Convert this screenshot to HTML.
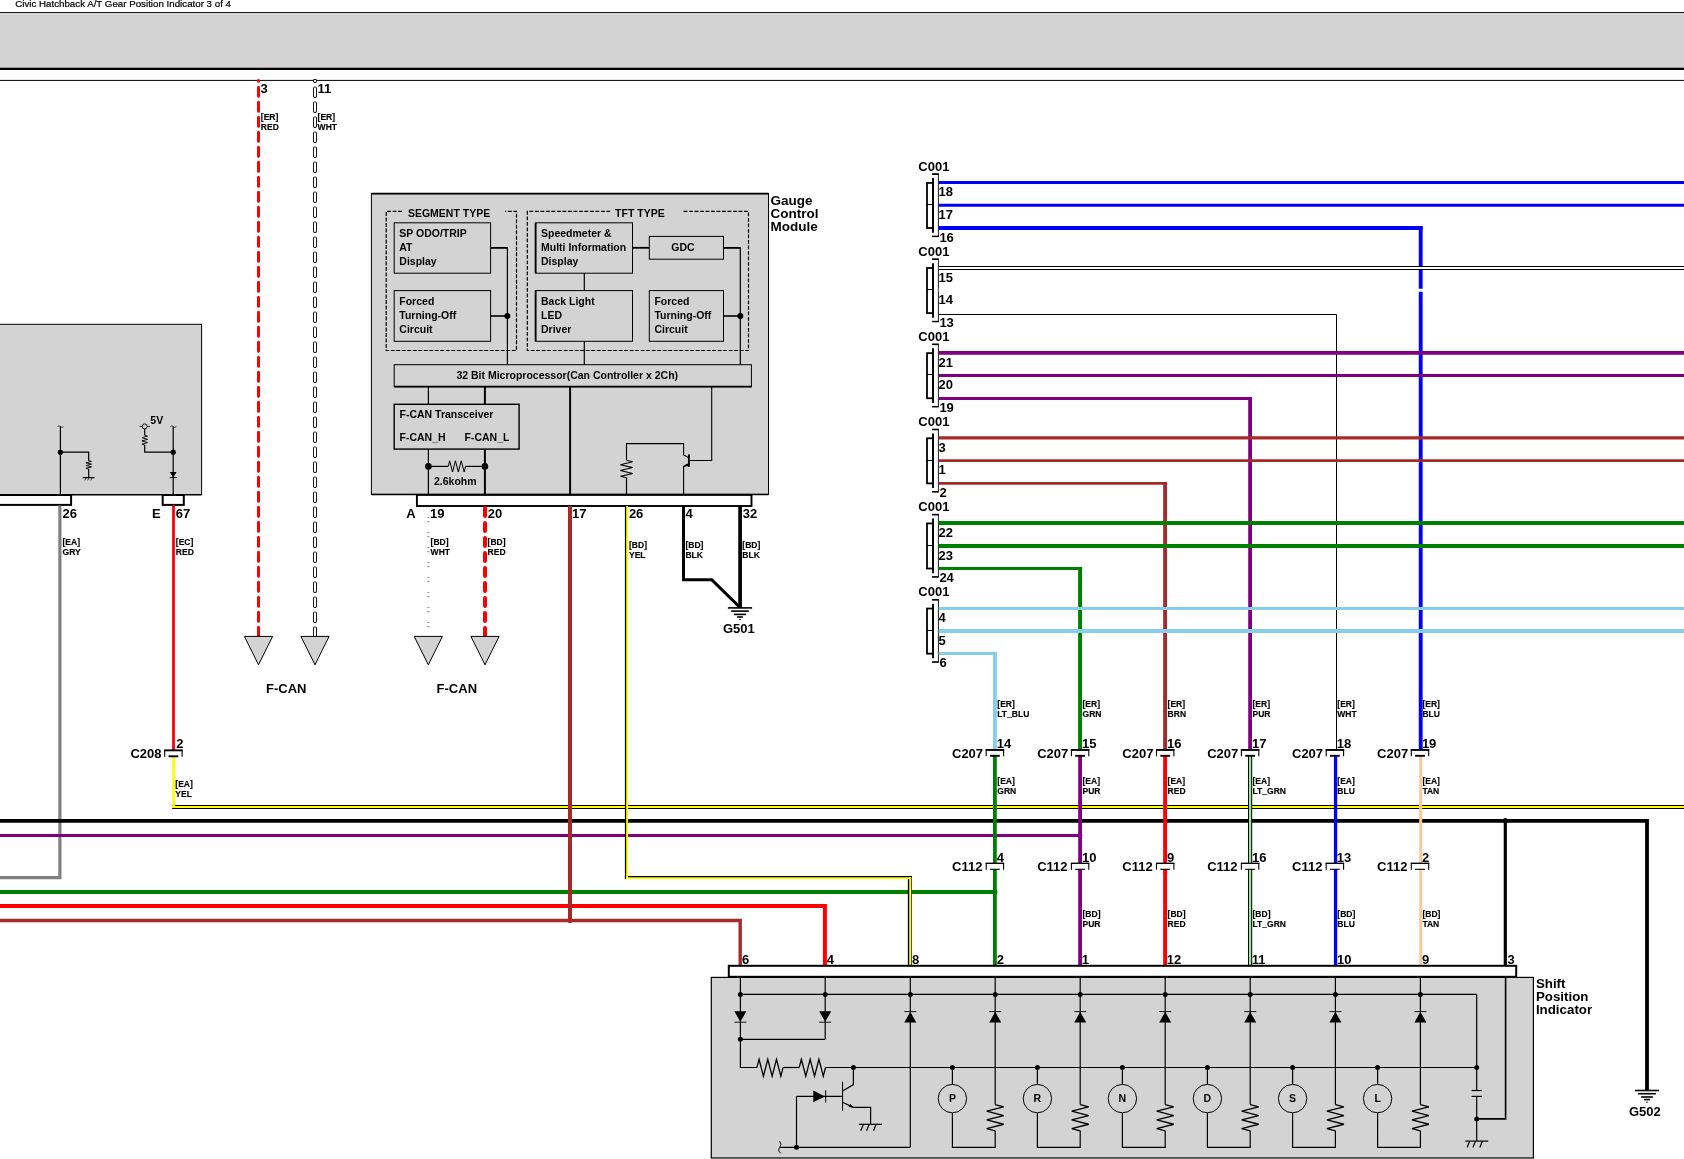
<!DOCTYPE html>
<html lang="en"><head><meta charset="utf-8"><title>Civic Hatchback A/T Gear Position Indicator 3 of 4</title>
<style>
html,body{margin:0;padding:0;background:#fff;}
body{width:1684px;height:1159px;overflow:hidden;}
svg{display:block;will-change:transform;}
text{font-family:"Liberation Sans",Arial,Helvetica,sans-serif;fill:#000;}
text.b{font-weight:bold;}
text.n{font-weight:normal;}
</style></head><body>
<svg width="1684" height="1159" viewBox="0 0 1684 1159">
<rect x="0" y="0" width="1684" height="1159" fill="#fff"/>
<text x="15.2" y="7.3" font-size="9" class="n" stroke="#000" stroke-width="0.2" textLength="215.8" lengthAdjust="spacingAndGlyphs">Civic Hatchback A/T Gear Position Indicator 3 of 4</text>
<rect x="-5" y="12.6" width="1695" height="56" fill="#d3d3d3" stroke="none" stroke-width="0" />
<line x1="0" y1="12.5" x2="1684" y2="12.5" stroke="#000" stroke-width="0.9" />
<line x1="0" y1="68.8" x2="1684" y2="68.8" stroke="#000" stroke-width="2.2" />
<line x1="0" y1="80.4" x2="1684" y2="80.4" stroke="#000" stroke-width="1" />
<line x1="258.5" y1="80.6" x2="258.5" y2="636" stroke="#f00" stroke-width="3" stroke-dasharray="9 6" stroke-dashoffset="8.3" stroke-linecap="round"/>
<line x1="315" y1="80.8" x2="315" y2="636" stroke="#000" stroke-width="4" stroke-dasharray="7.5 7.5" stroke-dashoffset="7.4" stroke-linecap="round"/>
<line x1="315" y1="80.8" x2="315" y2="636" stroke="#fff" stroke-width="2.2" stroke-dasharray="7.5 7.5" stroke-dashoffset="7.4" stroke-linecap="round"/>
<text x="260.6" y="92.7" font-size="13" class="b" >3</text>
<text x="317.5" y="92.7" font-size="13" class="b" >11</text>
<text transform="translate(260.8 119.9) scale(1.035 1)" font-size="8.25" class="b" stroke="#000" stroke-width="0.15">[ER]</text>
<text transform="translate(260.8 129.9) scale(1.035 1)" font-size="8.25" class="b" stroke="#000" stroke-width="0.15">RED</text>
<text transform="translate(317.6 119.9) scale(1.035 1)" font-size="8.25" class="b" stroke="#000" stroke-width="0.15">[ER]</text>
<text transform="translate(317.6 129.9) scale(1.035 1)" font-size="8.25" class="b" stroke="#000" stroke-width="0.15">WHT</text>
<polygon points="244.4,636.4 272.6,636.4 258.5,664.8" fill="#d3d3d3" stroke="#000" stroke-width="1"/>
<polygon points="300.9,636.4 329.1,636.4 315,664.8" fill="#d3d3d3" stroke="#000" stroke-width="1"/>
<text x="266" y="692.7" font-size="13" class="b" >F-CAN</text>
<rect x="-5" y="324.3" width="206.6" height="170.2" fill="#d3d3d3" stroke="#000" stroke-width="1" />
<rect x="-5" y="495" width="76.1" height="9.9" fill="#fff" stroke="#000" stroke-width="2" />
<rect x="162.7" y="495" width="21.1" height="9.9" fill="#fff" stroke="#000" stroke-width="2" />
<line x1="0" y1="494.8" x2="201.6" y2="494.8" stroke="#000" stroke-width="1.6" />
<line x1="60.4" y1="426.4" x2="60.4" y2="494.5" stroke="#000" stroke-width="1.2" />
<path d="M57.5 426.6 q1.5 -1.6 3 0 t3 0" fill="none" stroke="#000" stroke-width="0.7"/>
<circle cx="60.4" cy="452.2" r="2.6" fill="#000"/>
<polyline points="60.4,452.2 88.7,452.2 88.7,460.7" fill="none" stroke="#000" stroke-width="1.2" />
<polyline points="88.7,460.7 91.5,461.39 85.9,462.77 91.5,464.16 85.9,465.54 91.5,466.93 85.9,468.31 88.7,469" fill="none" stroke="#000" stroke-width="0.9" stroke-linejoin="miter"/>
<line x1="88.7" y1="469" x2="88.7" y2="477.6" stroke="#000" stroke-width="1.2" />
<line x1="82.6" y1="477.6" x2="94.6" y2="477.6" stroke="#000" stroke-width="1.2" />
<line x1="86.3" y1="477.6" x2="84.7" y2="480.4" stroke="#000" stroke-width="0.7" />
<line x1="89.3" y1="477.6" x2="87.7" y2="480.4" stroke="#000" stroke-width="0.7" />
<line x1="92.3" y1="477.6" x2="90.7" y2="480.4" stroke="#000" stroke-width="0.7" />
<circle cx="144.7" cy="426.4" r="2.5" fill="#d3d3d3" stroke="#000" stroke-width="0.9"/>
<line x1="139.5" y1="426.4" x2="142.2" y2="426.4" stroke="#000" stroke-width="0.8" />
<line x1="147.2" y1="426.4" x2="150" y2="426.4" stroke="#000" stroke-width="0.8" />
<line x1="144.7" y1="428.9" x2="144.7" y2="435.3" stroke="#000" stroke-width="1.2" />
<polyline points="144.7,435.3 147.5,436.11 141.9,437.73 147.5,439.34 141.9,440.96 147.5,442.57 141.9,444.19 144.7,445" fill="none" stroke="#000" stroke-width="0.9" stroke-linejoin="miter"/>
<polyline points="144.7,445 144.7,452.2 173.2,452.2" fill="none" stroke="#000" stroke-width="1.2" />
<text x="150.3" y="424.2" font-size="10.5" class="b" >5V</text>
<line x1="173.2" y1="426.4" x2="173.2" y2="494.5" stroke="#000" stroke-width="1.2" />
<path d="M170.3 426.6 q1.5 -1.6 3 0 t3 0" fill="none" stroke="#000" stroke-width="0.7"/>
<circle cx="173.2" cy="452.2" r="2.6" fill="#000"/>
<polygon points="169.8,472 176.6,472 173.2,477.4" fill="#000"/>
<line x1="169.6" y1="477.6" x2="176.8" y2="477.6" stroke="#000" stroke-width="0.9" />
<polyline points="59.9,505.4 59.9,877.6 -5,877.6" fill="none" stroke="#808080" stroke-width="3.2" />
<line x1="173.5" y1="505.4" x2="173.5" y2="750" stroke="#f00" stroke-width="2.8" />
<text x="62.5" y="518.3" font-size="13" class="b" >26</text>
<text x="152" y="518.3" font-size="13" class="b" >E</text>
<text x="175.8" y="518.3" font-size="13" class="b" >67</text>
<text transform="translate(62.5 545.3) scale(1.035 1)" font-size="8.25" class="b" stroke="#000" stroke-width="0.15">[EA]</text>
<text transform="translate(62.5 555.3) scale(1.035 1)" font-size="8.25" class="b" stroke="#000" stroke-width="0.15">GRY</text>
<text transform="translate(175.8 545.3) scale(1.035 1)" font-size="8.25" class="b" stroke="#000" stroke-width="0.15">[EC]</text>
<text transform="translate(175.8 555.3) scale(1.035 1)" font-size="8.25" class="b" stroke="#000" stroke-width="0.15">RED</text>
<rect x="371.4" y="193.6" width="397.1" height="300.8" fill="#d3d3d3" stroke="#000" stroke-width="1" />
<line x1="371.4" y1="193.6" x2="768.5" y2="193.6" stroke="#000" stroke-width="1.8" />
<text transform="translate(770.5 205.4) scale(1.04 1)" font-size="13" class="b" >Gauge</text>
<text transform="translate(770.5 218.2) scale(1.04 1)" font-size="13" class="b" >Control</text>
<text transform="translate(770.5 231.3) scale(1.04 1)" font-size="13" class="b" >Module</text>
<polyline points="402,211.4 386.2,211.4 386.2,350.5 516.5,350.5 516.5,211.4 505,211.4" fill="none" stroke="#000" stroke-width="1.2" stroke-dasharray="3.9 1.6"/>
<text transform="translate(407.9 217) scale(1.05 1)" font-size="10" class="b" >SEGMENT TYPE</text>
<polyline points="610.3,211.4 527.3,211.4 527.3,350.5 748.5,350.5 748.5,211.4 683,211.4" fill="none" stroke="#000" stroke-width="1.2" stroke-dasharray="3.9 1.6"/>
<text transform="translate(615.1 217) scale(1.05 1)" font-size="10" class="b" >TFT TYPE</text>
<rect x="394.2" y="222.8" width="96.4" height="50.4" fill="none" stroke="#000" stroke-width="1" />
<text transform="translate(399.3 237) scale(1.05 1)" font-size="10" class="b" >SP ODO/TRIP</text>
<text transform="translate(399.3 250.7) scale(1.05 1)" font-size="10" class="b" >AT</text>
<text transform="translate(399.3 265) scale(1.05 1)" font-size="10" class="b" >Display</text>
<rect x="394.2" y="290.6" width="96.4" height="50.7" fill="none" stroke="#000" stroke-width="1" />
<text transform="translate(399.3 304.9) scale(1.05 1)" font-size="10" class="b" >Forced</text>
<text transform="translate(399.3 318.6) scale(1.05 1)" font-size="10" class="b" >Turning-Off</text>
<text transform="translate(399.3 332.9) scale(1.05 1)" font-size="10" class="b" >Circuit</text>
<polyline points="490.6,247.8 507.4,247.8 507.4,364.7" fill="none" stroke="#000" stroke-width="1.2" />
<line x1="490.6" y1="247.8" x2="507.4" y2="247.8" stroke="#000" stroke-width="1.6" />
<line x1="490.6" y1="316" x2="507.4" y2="316" stroke="#000" stroke-width="1.6" />
<circle cx="507.4" cy="316" r="3" fill="#000"/>
<rect x="535.6" y="222.8" width="96.9" height="50.4" fill="none" stroke="#000" stroke-width="1" />
<line x1="535.6" y1="222.8" x2="535.6" y2="273.2" stroke="#000" stroke-width="1.8" />
<text transform="translate(541 237) scale(1.05 1)" font-size="10" class="b" >Speedmeter &amp;</text>
<text transform="translate(541 250.7) scale(1.05 1)" font-size="10" class="b" >Multi Information</text>
<text transform="translate(541 265) scale(1.05 1)" font-size="10" class="b" >Display</text>
<rect x="649.3" y="236.4" width="74.2" height="22.8" fill="none" stroke="#000" stroke-width="1" />
<text transform="translate(671.3 251) scale(1.05 1)" font-size="10" class="b" >GDC</text>
<line x1="632.5" y1="247.8" x2="649.3" y2="247.8" stroke="#000" stroke-width="1.8" />
<polyline points="723.5,247.8 740.3,247.8 740.3,364.7" fill="none" stroke="#000" stroke-width="1.2" />
<line x1="723.5" y1="247.8" x2="740.3" y2="247.8" stroke="#000" stroke-width="1.6" />
<rect x="535.6" y="290.6" width="96.9" height="50.7" fill="none" stroke="#000" stroke-width="1" />
<line x1="535.6" y1="290.6" x2="535.6" y2="341.3" stroke="#000" stroke-width="1.8" />
<text transform="translate(541 304.9) scale(1.05 1)" font-size="10" class="b" >Back Light</text>
<text transform="translate(541 318.6) scale(1.05 1)" font-size="10" class="b" >LED</text>
<text transform="translate(541 332.9) scale(1.05 1)" font-size="10" class="b" >Driver</text>
<rect x="649.3" y="290.6" width="74.2" height="50.7" fill="none" stroke="#000" stroke-width="1" />
<text transform="translate(654.4 304.9) scale(1.05 1)" font-size="10" class="b" >Forced</text>
<text transform="translate(654.4 318.6) scale(1.05 1)" font-size="10" class="b" >Turning-Off</text>
<text transform="translate(654.4 332.9) scale(1.05 1)" font-size="10" class="b" >Circuit</text>
<line x1="723.5" y1="316" x2="740.3" y2="316" stroke="#000" stroke-width="1.6" />
<circle cx="740.3" cy="316" r="3" fill="#000"/>
<line x1="584.3" y1="273.2" x2="584.3" y2="290.6" stroke="#000" stroke-width="1.2" />
<line x1="584.3" y1="341.3" x2="584.3" y2="364.7" stroke="#000" stroke-width="1.2" />
<rect x="394.2" y="364.7" width="357.2" height="22" fill="none" stroke="#000" stroke-width="1" />
<line x1="394.2" y1="386.7" x2="751.4" y2="386.7" stroke="#000" stroke-width="1.8" />
<text transform="translate(456.4 378.8) scale(1.05 1)" font-size="10" class="b" >32 Bit Microprocessor(Can Controller x 2Ch)</text>
<rect x="394.2" y="404.3" width="124.9" height="44.8" fill="none" stroke="#000" stroke-width="1.4" />
<text transform="translate(399.5 417.9) scale(1.05 1)" font-size="10" class="b" >F-CAN Transceiver</text>
<text transform="translate(399.5 440.9) scale(1.05 1)" font-size="10" class="b" >F-CAN_H</text>
<text transform="translate(464.5 440.9) scale(1.05 1)" font-size="10" class="b" >F-CAN_L</text>
<line x1="428.4" y1="386.7" x2="428.4" y2="404.3" stroke="#000" stroke-width="1.2" />
<line x1="484.9" y1="386.7" x2="484.9" y2="404.3" stroke="#000" stroke-width="2" />
<line x1="428.4" y1="449.1" x2="428.4" y2="494.4" stroke="#000" stroke-width="1.2" />
<line x1="484.9" y1="449.1" x2="484.9" y2="494.4" stroke="#000" stroke-width="2" />
<circle cx="428.4" cy="466.4" r="3.3" fill="#000"/>
<circle cx="484.9" cy="466.4" r="3.3" fill="#000"/>
<line x1="428.4" y1="466.4" x2="448.2" y2="466.4" stroke="#000" stroke-width="1.2" />
<line x1="465.6" y1="466.4" x2="484.9" y2="466.4" stroke="#000" stroke-width="1.2" />
<polyline points="448.2,466.4 449.65,460.8 452.55,472 455.45,460.8 458.35,472 461.25,460.8 464.15,472 465.6,466.4" fill="none" stroke="#000" stroke-width="1" stroke-linejoin="miter"/>
<text transform="translate(434 484.7) scale(1.05 1)" font-size="10" class="b" >2.6kohm</text>
<line x1="570.1" y1="386.7" x2="570.1" y2="494.4" stroke="#000" stroke-width="2" />
<polyline points="711.7,386.7 711.7,460.5 688.9,460.5" fill="none" stroke="#000" stroke-width="1.1" />
<line x1="688.9" y1="454.4" x2="688.9" y2="466.8" stroke="#000" stroke-width="1.9" />
<polyline points="626.5,460.3 626.5,443.6 683.6,443.6 683.6,455 688.4,457.4" fill="none" stroke="#000" stroke-width="1.1" />
<polyline points="688.4,463.9 683.6,466.4 683.6,494.4" fill="none" stroke="#000" stroke-width="1.1" />
<polygon points="683.2,466.9 687.2,463.4 688.2,466" fill="#000"/>
<polyline points="626.5,460.3 632.6,461.76 620.4,464.68 632.6,467.59 620.4,470.51 632.6,473.43 620.4,476.34 626.5,477.8" fill="none" stroke="#000" stroke-width="1.1" stroke-linejoin="miter"/>
<line x1="626.5" y1="477.5" x2="626.5" y2="494.4" stroke="#000" stroke-width="1.2" />
<rect x="416.9" y="494.9" width="334.6" height="11.1" fill="#fff" stroke="#000" stroke-width="1.9" />
<line x1="371.4" y1="494.6" x2="768.5" y2="494.6" stroke="#000" stroke-width="1.5" />
<text x="406.2" y="518.3" font-size="13" class="b" >A</text>
<text x="430" y="518.3" font-size="13" class="b" >19</text>
<text x="487.7" y="518.3" font-size="13" class="b" >20</text>
<text x="572" y="518.3" font-size="13" class="b" >17</text>
<text x="628.9" y="518.3" font-size="13" class="b" >26</text>
<text x="685.5" y="518.3" font-size="13" class="b" >4</text>
<text x="742.8" y="518.3" font-size="13" class="b" >32</text>
<text transform="translate(430.6 545.3) scale(1.035 1)" font-size="8.25" class="b" stroke="#000" stroke-width="0.15">[BD]</text>
<text transform="translate(430.6 555.3) scale(1.035 1)" font-size="8.25" class="b" stroke="#000" stroke-width="0.15">WHT</text>
<text transform="translate(487.6 545.3) scale(1.035 1)" font-size="8.25" class="b" stroke="#000" stroke-width="0.15">[BD]</text>
<text transform="translate(487.6 555.3) scale(1.035 1)" font-size="8.25" class="b" stroke="#000" stroke-width="0.15">RED</text>
<text transform="translate(629 548) scale(1.035 1)" font-size="8.25" class="b" stroke="#000" stroke-width="0.15">[BD]</text>
<text transform="translate(629 558) scale(1.035 1)" font-size="8.25" class="b" stroke="#000" stroke-width="0.15">YEL</text>
<text transform="translate(685.4 548) scale(1.035 1)" font-size="8.25" class="b" stroke="#000" stroke-width="0.15">[BD]</text>
<text transform="translate(685.4 558) scale(1.035 1)" font-size="8.25" class="b" stroke="#000" stroke-width="0.15">BLK</text>
<text transform="translate(742.3 548) scale(1.035 1)" font-size="8.25" class="b" stroke="#000" stroke-width="0.15">[BD]</text>
<text transform="translate(742.3 558) scale(1.035 1)" font-size="8.25" class="b" stroke="#000" stroke-width="0.15">BLK</text>
<line x1="428.4" y1="516.9" x2="428.4" y2="628" stroke="#999" stroke-width="2.2" stroke-dasharray="1.2 3 1.2 9.6" />
<line x1="485" y1="508" x2="485" y2="636.5" stroke="#f00" stroke-width="4" stroke-dasharray="8 7" stroke-linecap="round"/>
<polygon points="414.2,636.4 442.4,636.4 428.3,664.8" fill="#d3d3d3" stroke="#000" stroke-width="1"/>
<polygon points="470.9,636.4 499.1,636.4 485,664.8" fill="#d3d3d3" stroke="#000" stroke-width="1"/>
<text x="436.6" y="692.7" font-size="13" class="b" >F-CAN</text>
<polyline points="683.5,506 683.5,579.8 711.7,579.8 739.9,607.4" fill="none" stroke="#000" stroke-width="3" stroke-linejoin="miter"/>
<line x1="740.1" y1="506" x2="740.1" y2="608" stroke="#000" stroke-width="3.7" />
<line x1="727.9" y1="607.9" x2="752.1" y2="607.9" stroke="#000" stroke-width="1.6" />
<line x1="731.1" y1="611.1" x2="748.9" y2="611.1" stroke="#000" stroke-width="1.6" />
<line x1="734.1" y1="614.4" x2="745.9" y2="614.4" stroke="#000" stroke-width="1.6" />
<line x1="737.1" y1="617" x2="742.9" y2="617" stroke="#000" stroke-width="1.6" />
<line x1="739.2" y1="619.6" x2="740.8" y2="619.6" stroke="#000" stroke-width="1" />
<text x="722.9" y="633.4" font-size="13" class="b" >G501</text>
<line x1="172.2" y1="807" x2="1690" y2="807" stroke="#000" stroke-width="4" />
<line x1="172.2" y1="807" x2="1690" y2="807" stroke="#ff0" stroke-width="2.2" />
<line x1="173.6" y1="757" x2="173.6" y2="808" stroke="#ff0" stroke-width="2.8" />
<polyline points="-5,820.9 1647,820.9 1647,1090" fill="none" stroke="#000" stroke-width="3.8" stroke-linejoin="miter"/>
<line x1="1505.3" y1="820.9" x2="1505.3" y2="966" stroke="#000" stroke-width="3.2" />
<circle cx="1505.3" cy="820.6" r="2.5" fill="#000"/>
<line x1="1634.9" y1="1090.5" x2="1659.1" y2="1090.5" stroke="#000" stroke-width="1.6" />
<line x1="1638.1" y1="1093.7" x2="1655.9" y2="1093.7" stroke="#000" stroke-width="1.6" />
<line x1="1641.1" y1="1097" x2="1652.9" y2="1097" stroke="#000" stroke-width="1.6" />
<line x1="1644.1" y1="1099.6" x2="1649.9" y2="1099.6" stroke="#000" stroke-width="1.6" />
<line x1="1646.2" y1="1102.2" x2="1647.8" y2="1102.2" stroke="#000" stroke-width="1" />
<text x="1628.9" y="1115.7" font-size="13" class="b" >G502</text>
<line x1="-5" y1="835.4" x2="1080" y2="835.4" stroke="#800080" stroke-width="3" />
<line x1="-5" y1="892" x2="995" y2="892" stroke="#008000" stroke-width="4" />
<line x1="626.45" y1="506" x2="626.45" y2="879" stroke="#000" stroke-width="3.1" />
<line x1="624.9" y1="877.45" x2="911.9" y2="877.45" stroke="#000" stroke-width="3.15" />
<line x1="909.85" y1="876" x2="909.85" y2="966" stroke="#000" stroke-width="4" />
<line x1="627.1" y1="506" x2="627.1" y2="879.06" stroke="#ff0" stroke-width="1.9" />
<line x1="626.2" y1="878.1" x2="911.2" y2="878.1" stroke="#ff0" stroke-width="1.95" />
<line x1="910.2" y1="877.1" x2="910.2" y2="966" stroke="#ff0" stroke-width="2" />
<polyline points="-5,906 824.9,906 824.9,966" fill="none" stroke="#f00" stroke-width="4" stroke-linejoin="miter"/>
<line x1="570" y1="506" x2="570" y2="920.5" stroke="#a52a2a" stroke-width="4" />
<polyline points="-5,920.5 740.2,920.5 740.2,966" fill="none" stroke="#a52a2a" stroke-width="3.4" stroke-linejoin="miter"/>
<circle cx="570" cy="920.5" r="2.6" fill="#a52a2a"/>
<rect x="169.4" y="750.7" width="8" height="5.3" fill="#fff" stroke="none" stroke-width="0" />
<polyline points="164.7,756.8 164.7,750.4 182.1,750.4 182.1,756.8" fill="none" stroke="#000" stroke-width="1.1" />
<line x1="164.2" y1="750.4" x2="182.6" y2="750.4" stroke="#000" stroke-width="1.8" />
<line x1="168.5" y1="756.3" x2="178.3" y2="756.3" stroke="#000" stroke-width="1.9" />
<text x="130.4" y="758.4" font-size="13" class="b" >C208</text>
<text x="176.3" y="748.4" font-size="13" class="b" >2</text>
<text transform="translate(175.3 786.8) scale(1.035 1)" font-size="8.25" class="b" stroke="#000" stroke-width="0.15">[EA]</text>
<text transform="translate(175.3 796.8) scale(1.035 1)" font-size="8.25" class="b" stroke="#000" stroke-width="0.15">YEL</text>
<text x="918.3" y="171.1" font-size="13" class="b" >C001</text>
<rect x="927" y="182.9" width="6" height="45.1" fill="#fff" stroke="#000" stroke-width="1.8" />
<line x1="927" y1="204.5" x2="933" y2="204.5" stroke="#000" stroke-width="1" />
<line x1="933" y1="178.1" x2="933" y2="232.7" stroke="#000" stroke-width="1.9" />
<polyline points="932.1,174.1 938.4,174.1 938.4,236.4 932.1,236.4" fill="none" stroke="#000" stroke-width="0.9" />
<line x1="932.1" y1="174.1" x2="938.8" y2="174.1" stroke="#000" stroke-width="1.6" />
<line x1="932.1" y1="236.4" x2="938.8" y2="236.4" stroke="#000" stroke-width="1.4" />
<text x="938.6" y="196.4" font-size="13" class="b" >18</text>
<text x="938.6" y="219" font-size="13" class="b" >17</text>
<text x="939.4" y="241.6" font-size="13" class="b" >16</text>
<line x1="938.7" y1="182.5" x2="1690" y2="182.5" stroke="#00f" stroke-width="3" />
<line x1="938.7" y1="205.2" x2="1690" y2="205.2" stroke="#00f" stroke-width="3" />
<line x1="938.7" y1="228" x2="1422.65" y2="228" stroke="#00f" stroke-width="3.8" />
<line x1="1420.7" y1="226.1" x2="1420.7" y2="749.9" stroke="#00f" stroke-width="3.9" />
<text x="918.3" y="256.15" font-size="13" class="b" >C001</text>
<rect x="927" y="268.03" width="6" height="45.1" fill="#fff" stroke="#000" stroke-width="1.8" />
<line x1="927" y1="289.5" x2="933" y2="289.5" stroke="#000" stroke-width="1" />
<line x1="933" y1="263.23" x2="933" y2="317.83" stroke="#000" stroke-width="1.9" />
<polyline points="932.1,259.23 938.4,259.23 938.4,321.53 932.1,321.53" fill="none" stroke="#000" stroke-width="0.9" />
<line x1="932.1" y1="259.23" x2="938.8" y2="259.23" stroke="#000" stroke-width="1.6" />
<line x1="932.1" y1="321.53" x2="938.8" y2="321.53" stroke="#000" stroke-width="1.4" />
<text x="938.6" y="281.53" font-size="13" class="b" >15</text>
<text x="938.6" y="304.13" font-size="13" class="b" >14</text>
<text x="939.4" y="326.73" font-size="13" class="b" >13</text>
<line x1="938.7" y1="268.1" x2="1690" y2="268.1" stroke="#000" stroke-width="4" />
<line x1="938.7" y1="268.1" x2="1690" y2="268.1" stroke="#fff" stroke-width="2" />
<line x1="938.7" y1="290.33" x2="1690" y2="290.33" stroke="#fff" stroke-width="3" />
<polyline points="938.7,314.5 1336.5,314.5 1336.5,749.9" fill="none" stroke="#000" stroke-width="1" stroke-linejoin="miter"/>
<text x="918.3" y="341.2" font-size="13" class="b" >C001</text>
<rect x="927" y="353.16" width="6" height="45.1" fill="#fff" stroke="#000" stroke-width="1.8" />
<line x1="927" y1="374.5" x2="933" y2="374.5" stroke="#000" stroke-width="1" />
<line x1="933" y1="348.36" x2="933" y2="402.96" stroke="#000" stroke-width="1.9" />
<polyline points="932.1,344.36 938.4,344.36 938.4,406.66 932.1,406.66" fill="none" stroke="#000" stroke-width="0.9" />
<line x1="932.1" y1="344.36" x2="938.8" y2="344.36" stroke="#000" stroke-width="1.6" />
<line x1="932.1" y1="406.66" x2="938.8" y2="406.66" stroke="#000" stroke-width="1.4" />
<text x="938.6" y="366.66" font-size="13" class="b" >21</text>
<text x="938.6" y="389.26" font-size="13" class="b" >20</text>
<text x="939.4" y="411.86" font-size="13" class="b" >19</text>
<line x1="938.7" y1="352.96" x2="1690" y2="352.96" stroke="#800080" stroke-width="3.8" />
<line x1="938.7" y1="375.46" x2="1690" y2="375.46" stroke="#800080" stroke-width="3.1" />
<line x1="938.7" y1="398.46" x2="1252" y2="398.46" stroke="#800080" stroke-width="3.1" />
<line x1="1250.1" y1="396.91" x2="1250.1" y2="749.9" stroke="#800080" stroke-width="3.8" />
<text x="918.3" y="426.25" font-size="13" class="b" >C001</text>
<rect x="927" y="438.29" width="6" height="45.1" fill="#fff" stroke="#000" stroke-width="1.8" />
<line x1="927" y1="460.5" x2="933" y2="460.5" stroke="#000" stroke-width="1" />
<line x1="933" y1="433.49" x2="933" y2="488.09" stroke="#000" stroke-width="1.9" />
<polyline points="932.1,429.49 938.4,429.49 938.4,491.79 932.1,491.79" fill="none" stroke="#000" stroke-width="0.9" />
<line x1="932.1" y1="429.49" x2="938.8" y2="429.49" stroke="#000" stroke-width="1.6" />
<line x1="932.1" y1="491.79" x2="938.8" y2="491.79" stroke="#000" stroke-width="1.4" />
<text x="938.6" y="451.79" font-size="13" class="b" >3</text>
<text x="938.6" y="474.39" font-size="13" class="b" >1</text>
<text x="939.4" y="496.99" font-size="13" class="b" >2</text>
<line x1="938.7" y1="437.89" x2="1690" y2="437.89" stroke="#a52a2a" stroke-width="3.4" />
<line x1="938.7" y1="460.59" x2="1690" y2="460.59" stroke="#a52a2a" stroke-width="2.8" />
<line x1="938.7" y1="483.39" x2="1167.05" y2="483.39" stroke="#a52a2a" stroke-width="2.9" />
<line x1="1165.1" y1="481.94" x2="1165.1" y2="749.9" stroke="#a52a2a" stroke-width="3.9" />
<text x="918.3" y="511.3" font-size="13" class="b" >C001</text>
<rect x="927" y="523.42" width="6" height="45.1" fill="#fff" stroke="#000" stroke-width="1.8" />
<line x1="927" y1="545.5" x2="933" y2="545.5" stroke="#000" stroke-width="1" />
<line x1="933" y1="518.62" x2="933" y2="573.22" stroke="#000" stroke-width="1.9" />
<polyline points="932.1,514.62 938.4,514.62 938.4,576.92 932.1,576.92" fill="none" stroke="#000" stroke-width="0.9" />
<line x1="932.1" y1="514.62" x2="938.8" y2="514.62" stroke="#000" stroke-width="1.6" />
<line x1="932.1" y1="576.92" x2="938.8" y2="576.92" stroke="#000" stroke-width="1.4" />
<text x="938.6" y="536.92" font-size="13" class="b" >22</text>
<text x="938.6" y="559.52" font-size="13" class="b" >23</text>
<text x="939.4" y="582.12" font-size="13" class="b" >24</text>
<line x1="938.7" y1="523.02" x2="1690" y2="523.02" stroke="#008000" stroke-width="3.8" />
<line x1="938.7" y1="545.92" x2="1690" y2="545.92" stroke="#008000" stroke-width="4" />
<line x1="938.7" y1="568.52" x2="1082.1" y2="568.52" stroke="#008000" stroke-width="3.1" />
<line x1="1080.1" y1="566.97" x2="1080.1" y2="749.9" stroke="#008000" stroke-width="4" />
<text x="918.3" y="596.35" font-size="13" class="b" >C001</text>
<rect x="927" y="608.55" width="6" height="45.1" fill="#fff" stroke="#000" stroke-width="1.8" />
<line x1="927" y1="630.5" x2="933" y2="630.5" stroke="#000" stroke-width="1" />
<line x1="933" y1="603.75" x2="933" y2="658.35" stroke="#000" stroke-width="1.9" />
<polyline points="932.1,599.75 938.4,599.75 938.4,662.05 932.1,662.05" fill="none" stroke="#000" stroke-width="0.9" />
<line x1="932.1" y1="599.75" x2="938.8" y2="599.75" stroke="#000" stroke-width="1.6" />
<line x1="932.1" y1="662.05" x2="938.8" y2="662.05" stroke="#000" stroke-width="1.4" />
<text x="938.6" y="622.05" font-size="13" class="b" >4</text>
<text x="938.6" y="644.65" font-size="13" class="b" >5</text>
<text x="939.4" y="667.25" font-size="13" class="b" >6</text>
<line x1="938.7" y1="608.55" x2="1690" y2="608.55" stroke="#87ceeb" stroke-width="3" />
<line x1="938.7" y1="631" x2="1690" y2="631" stroke="#87ceeb" stroke-width="3.8" />
<line x1="938.7" y1="653.5" x2="996.85" y2="653.5" stroke="#87ceeb" stroke-width="3" />
<line x1="994.9" y1="652" x2="994.9" y2="749.9" stroke="#87ceeb" stroke-width="3.9" />
<line x1="994.9" y1="756" x2="994.9" y2="966" stroke="#008000" stroke-width="3.8" />
<line x1="1080.1" y1="756" x2="1080.1" y2="966" stroke="#800080" stroke-width="3.8" />
<line x1="1165.1" y1="756" x2="1165.1" y2="966" stroke="#f00" stroke-width="3.9" />
<line x1="1250.1" y1="756" x2="1250.1" y2="966" stroke="#000" stroke-width="4.2" />
<line x1="1250.1" y1="756" x2="1250.1" y2="966" stroke="#90ee90" stroke-width="2.2" />
<line x1="1335.55" y1="756" x2="1335.55" y2="966" stroke="#00f" stroke-width="3.3" />
<line x1="1420.7" y1="756" x2="1420.7" y2="966" stroke="#fdc998" stroke-width="3" />
<circle cx="1080" cy="835.4" r="2.4" fill="#800080"/>
<circle cx="994.9" cy="892" r="2.6" fill="#008000"/>
<rect x="990.9" y="750.2" width="8" height="5.3" fill="#fff" stroke="none" stroke-width="0" />
<polyline points="986.2,756.3 986.2,749.9 1003.6,749.9 1003.6,756.3" fill="none" stroke="#000" stroke-width="1.1" />
<line x1="985.7" y1="749.9" x2="1004.1" y2="749.9" stroke="#000" stroke-width="1.8" />
<line x1="990" y1="755.8" x2="999.8" y2="755.8" stroke="#000" stroke-width="1.9" />
<text x="952" y="757.9" font-size="13" class="b" >C207</text>
<text x="996.8" y="747.9" font-size="13" class="b" >14</text>
<rect x="990.9" y="863.7" width="8" height="5.3" fill="#fff" stroke="none" stroke-width="0" />
<polyline points="986.2,869.8 986.2,863.4 1003.6,863.4 1003.6,869.8" fill="none" stroke="#000" stroke-width="1.1" />
<line x1="985.7" y1="863.4" x2="1004.1" y2="863.4" stroke="#000" stroke-width="1.2" />
<line x1="990" y1="869.3" x2="999.8" y2="869.3" stroke="#000" stroke-width="1.1" />
<text x="952" y="871.4" font-size="13" class="b" >C112</text>
<text x="996.8" y="862.1" font-size="13" class="b" >4</text>
<text transform="translate(997.3 706.9) scale(1.035 1)" font-size="8.25" class="b" stroke="#000" stroke-width="0.15">[ER]</text>
<text transform="translate(997.3 717) scale(1.035 1)" font-size="8.25" class="b" stroke="#000" stroke-width="0.15">LT_BLU</text>
<text transform="translate(997.3 783.5) scale(1.035 1)" font-size="8.25" class="b" stroke="#000" stroke-width="0.15">[EA]</text>
<text transform="translate(997.3 793.8) scale(1.035 1)" font-size="8.25" class="b" stroke="#000" stroke-width="0.15">GRN</text>
<rect x="1076.1" y="750.2" width="8" height="5.3" fill="#fff" stroke="none" stroke-width="0" />
<polyline points="1071.4,756.3 1071.4,749.9 1088.8,749.9 1088.8,756.3" fill="none" stroke="#000" stroke-width="1.1" />
<line x1="1070.9" y1="749.9" x2="1089.3" y2="749.9" stroke="#000" stroke-width="1.8" />
<line x1="1075.2" y1="755.8" x2="1085" y2="755.8" stroke="#000" stroke-width="1.9" />
<text x="1037.2" y="757.9" font-size="13" class="b" >C207</text>
<text x="1082" y="747.9" font-size="13" class="b" >15</text>
<rect x="1076.1" y="863.7" width="8" height="5.3" fill="#fff" stroke="none" stroke-width="0" />
<polyline points="1071.4,869.8 1071.4,863.4 1088.8,863.4 1088.8,869.8" fill="none" stroke="#000" stroke-width="1.1" />
<line x1="1070.9" y1="863.4" x2="1089.3" y2="863.4" stroke="#000" stroke-width="1.2" />
<line x1="1075.2" y1="869.3" x2="1085" y2="869.3" stroke="#000" stroke-width="1.1" />
<text x="1037.2" y="871.4" font-size="13" class="b" >C112</text>
<text x="1082" y="862.1" font-size="13" class="b" >10</text>
<text transform="translate(1082.5 706.9) scale(1.035 1)" font-size="8.25" class="b" stroke="#000" stroke-width="0.15">[ER]</text>
<text transform="translate(1082.5 717) scale(1.035 1)" font-size="8.25" class="b" stroke="#000" stroke-width="0.15">GRN</text>
<text transform="translate(1082.5 783.5) scale(1.035 1)" font-size="8.25" class="b" stroke="#000" stroke-width="0.15">[EA]</text>
<text transform="translate(1082.5 793.8) scale(1.035 1)" font-size="8.25" class="b" stroke="#000" stroke-width="0.15">PUR</text>
<text transform="translate(1082.5 917) scale(1.035 1)" font-size="8.25" class="b" stroke="#000" stroke-width="0.15">[BD]</text>
<text transform="translate(1082.5 926.9) scale(1.035 1)" font-size="8.25" class="b" stroke="#000" stroke-width="0.15">PUR</text>
<rect x="1161.2" y="750.2" width="8" height="5.3" fill="#fff" stroke="none" stroke-width="0" />
<polyline points="1156.5,756.3 1156.5,749.9 1173.9,749.9 1173.9,756.3" fill="none" stroke="#000" stroke-width="1.1" />
<line x1="1156" y1="749.9" x2="1174.4" y2="749.9" stroke="#000" stroke-width="1.8" />
<line x1="1160.3" y1="755.8" x2="1170.1" y2="755.8" stroke="#000" stroke-width="1.9" />
<text x="1122.3" y="757.9" font-size="13" class="b" >C207</text>
<text x="1167.1" y="747.9" font-size="13" class="b" >16</text>
<rect x="1161.2" y="863.7" width="8" height="5.3" fill="#fff" stroke="none" stroke-width="0" />
<polyline points="1156.5,869.8 1156.5,863.4 1173.9,863.4 1173.9,869.8" fill="none" stroke="#000" stroke-width="1.1" />
<line x1="1156" y1="863.4" x2="1174.4" y2="863.4" stroke="#000" stroke-width="1.2" />
<line x1="1160.3" y1="869.3" x2="1170.1" y2="869.3" stroke="#000" stroke-width="1.1" />
<text x="1122.3" y="871.4" font-size="13" class="b" >C112</text>
<text x="1167.1" y="862.1" font-size="13" class="b" >9</text>
<text transform="translate(1167.6 706.9) scale(1.035 1)" font-size="8.25" class="b" stroke="#000" stroke-width="0.15">[ER]</text>
<text transform="translate(1167.6 717) scale(1.035 1)" font-size="8.25" class="b" stroke="#000" stroke-width="0.15">BRN</text>
<text transform="translate(1167.6 783.5) scale(1.035 1)" font-size="8.25" class="b" stroke="#000" stroke-width="0.15">[EA]</text>
<text transform="translate(1167.6 793.8) scale(1.035 1)" font-size="8.25" class="b" stroke="#000" stroke-width="0.15">RED</text>
<text transform="translate(1167.6 917) scale(1.035 1)" font-size="8.25" class="b" stroke="#000" stroke-width="0.15">[BD]</text>
<text transform="translate(1167.6 926.9) scale(1.035 1)" font-size="8.25" class="b" stroke="#000" stroke-width="0.15">RED</text>
<rect x="1246.1" y="750.2" width="8" height="5.3" fill="#fff" stroke="none" stroke-width="0" />
<polyline points="1241.4,756.3 1241.4,749.9 1258.8,749.9 1258.8,756.3" fill="none" stroke="#000" stroke-width="1.1" />
<line x1="1240.9" y1="749.9" x2="1259.3" y2="749.9" stroke="#000" stroke-width="1.8" />
<line x1="1245.2" y1="755.8" x2="1255" y2="755.8" stroke="#000" stroke-width="1.9" />
<text x="1207.2" y="757.9" font-size="13" class="b" >C207</text>
<text x="1252" y="747.9" font-size="13" class="b" >17</text>
<rect x="1246.1" y="863.7" width="8" height="5.3" fill="#fff" stroke="none" stroke-width="0" />
<polyline points="1241.4,869.8 1241.4,863.4 1258.8,863.4 1258.8,869.8" fill="none" stroke="#000" stroke-width="1.1" />
<line x1="1240.9" y1="863.4" x2="1259.3" y2="863.4" stroke="#000" stroke-width="1.2" />
<line x1="1245.2" y1="869.3" x2="1255" y2="869.3" stroke="#000" stroke-width="1.1" />
<text x="1207.2" y="871.4" font-size="13" class="b" >C112</text>
<text x="1252" y="862.1" font-size="13" class="b" >16</text>
<text transform="translate(1252.5 706.9) scale(1.035 1)" font-size="8.25" class="b" stroke="#000" stroke-width="0.15">[ER]</text>
<text transform="translate(1252.5 717) scale(1.035 1)" font-size="8.25" class="b" stroke="#000" stroke-width="0.15">PUR</text>
<text transform="translate(1252.5 783.5) scale(1.035 1)" font-size="8.25" class="b" stroke="#000" stroke-width="0.15">[EA]</text>
<text transform="translate(1252.5 793.8) scale(1.035 1)" font-size="8.25" class="b" stroke="#000" stroke-width="0.15">LT_GRN</text>
<text transform="translate(1252.5 917) scale(1.035 1)" font-size="8.25" class="b" stroke="#000" stroke-width="0.15">[BD]</text>
<text transform="translate(1252.5 926.9) scale(1.035 1)" font-size="8.25" class="b" stroke="#000" stroke-width="0.15">LT_GRN</text>
<rect x="1330.9" y="750.2" width="8" height="5.3" fill="#fff" stroke="none" stroke-width="0" />
<polyline points="1326.2,756.3 1326.2,749.9 1343.6,749.9 1343.6,756.3" fill="none" stroke="#000" stroke-width="1.1" />
<line x1="1325.7" y1="749.9" x2="1344.1" y2="749.9" stroke="#000" stroke-width="1.8" />
<line x1="1330" y1="755.8" x2="1339.8" y2="755.8" stroke="#000" stroke-width="1.9" />
<text x="1292" y="757.9" font-size="13" class="b" >C207</text>
<text x="1336.8" y="747.9" font-size="13" class="b" >18</text>
<rect x="1330.9" y="863.7" width="8" height="5.3" fill="#fff" stroke="none" stroke-width="0" />
<polyline points="1326.2,869.8 1326.2,863.4 1343.6,863.4 1343.6,869.8" fill="none" stroke="#000" stroke-width="1.1" />
<line x1="1325.7" y1="863.4" x2="1344.1" y2="863.4" stroke="#000" stroke-width="1.2" />
<line x1="1330" y1="869.3" x2="1339.8" y2="869.3" stroke="#000" stroke-width="1.1" />
<text x="1292" y="871.4" font-size="13" class="b" >C112</text>
<text x="1336.8" y="862.1" font-size="13" class="b" >13</text>
<text transform="translate(1337.3 706.9) scale(1.035 1)" font-size="8.25" class="b" stroke="#000" stroke-width="0.15">[ER]</text>
<text transform="translate(1337.3 717) scale(1.035 1)" font-size="8.25" class="b" stroke="#000" stroke-width="0.15">WHT</text>
<text transform="translate(1337.3 783.5) scale(1.035 1)" font-size="8.25" class="b" stroke="#000" stroke-width="0.15">[EA]</text>
<text transform="translate(1337.3 793.8) scale(1.035 1)" font-size="8.25" class="b" stroke="#000" stroke-width="0.15">BLU</text>
<text transform="translate(1337.3 917) scale(1.035 1)" font-size="8.25" class="b" stroke="#000" stroke-width="0.15">[BD]</text>
<text transform="translate(1337.3 926.9) scale(1.035 1)" font-size="8.25" class="b" stroke="#000" stroke-width="0.15">BLU</text>
<rect x="1416" y="750.2" width="8" height="5.3" fill="#fff" stroke="none" stroke-width="0" />
<polyline points="1411.3,756.3 1411.3,749.9 1428.7,749.9 1428.7,756.3" fill="none" stroke="#000" stroke-width="1.1" />
<line x1="1410.8" y1="749.9" x2="1429.2" y2="749.9" stroke="#000" stroke-width="1.8" />
<line x1="1415.1" y1="755.8" x2="1424.9" y2="755.8" stroke="#000" stroke-width="1.9" />
<text x="1377.1" y="757.9" font-size="13" class="b" >C207</text>
<text x="1421.9" y="747.9" font-size="13" class="b" >19</text>
<rect x="1416" y="863.7" width="8" height="5.3" fill="#fff" stroke="none" stroke-width="0" />
<polyline points="1411.3,869.8 1411.3,863.4 1428.7,863.4 1428.7,869.8" fill="none" stroke="#000" stroke-width="1.1" />
<line x1="1410.8" y1="863.4" x2="1429.2" y2="863.4" stroke="#000" stroke-width="1.2" />
<line x1="1415.1" y1="869.3" x2="1424.9" y2="869.3" stroke="#000" stroke-width="1.1" />
<text x="1377.1" y="871.4" font-size="13" class="b" >C112</text>
<text x="1421.9" y="862.1" font-size="13" class="b" >2</text>
<text transform="translate(1422.4 706.9) scale(1.035 1)" font-size="8.25" class="b" stroke="#000" stroke-width="0.15">[ER]</text>
<text transform="translate(1422.4 717) scale(1.035 1)" font-size="8.25" class="b" stroke="#000" stroke-width="0.15">BLU</text>
<text transform="translate(1422.4 783.5) scale(1.035 1)" font-size="8.25" class="b" stroke="#000" stroke-width="0.15">[EA]</text>
<text transform="translate(1422.4 793.8) scale(1.035 1)" font-size="8.25" class="b" stroke="#000" stroke-width="0.15">TAN</text>
<text transform="translate(1422.4 917) scale(1.035 1)" font-size="8.25" class="b" stroke="#000" stroke-width="0.15">[BD]</text>
<text transform="translate(1422.4 926.9) scale(1.035 1)" font-size="8.25" class="b" stroke="#000" stroke-width="0.15">TAN</text>
<rect x="711.3" y="977.4" width="822.1" height="180.6" fill="#d3d3d3" stroke="#000" stroke-width="1.2" />
<rect x="728.8" y="965.8" width="787.4" height="11" fill="#fff" stroke="#000" stroke-width="2" />
<text transform="translate(1535.9 987.5) scale(1.025 1)" font-size="13" class="b" >Shift</text>
<text transform="translate(1535.9 1000.7) scale(1.025 1)" font-size="13" class="b" >Position</text>
<text transform="translate(1535.9 1013.9) scale(1.025 1)" font-size="13" class="b" >Indicator</text>
<text x="742" y="963.8" font-size="13" class="b" >6</text>
<text x="826.8" y="963.8" font-size="13" class="b" >4</text>
<text x="911.9" y="963.8" font-size="13" class="b" >8</text>
<text x="996.8" y="963.8" font-size="13" class="b" >2</text>
<text x="1081.8" y="963.8" font-size="13" class="b" >1</text>
<text x="1166.8" y="963.8" font-size="13" class="b" >12</text>
<text x="1251.8" y="963.8" font-size="13" class="b" >11</text>
<text x="1337" y="963.8" font-size="13" class="b" >10</text>
<text x="1422" y="963.8" font-size="13" class="b" >9</text>
<text x="1507.6" y="963.8" font-size="13" class="b" >3</text>
<line x1="740.4" y1="994.4" x2="1476.7" y2="994.4" stroke="#000" stroke-width="1.2" />
<line x1="740.4" y1="977.8" x2="740.4" y2="994.4" stroke="#000" stroke-width="1.2" />
<circle cx="740.4" cy="994.4" r="2.5" fill="#000"/>
<line x1="825.2" y1="977.8" x2="825.2" y2="994.4" stroke="#000" stroke-width="1.2" />
<circle cx="825.2" cy="994.4" r="2.5" fill="#000"/>
<line x1="910.3" y1="977.8" x2="910.3" y2="994.4" stroke="#000" stroke-width="1.2" />
<circle cx="910.3" cy="994.4" r="2.5" fill="#000"/>
<line x1="995.2" y1="977.8" x2="995.2" y2="994.4" stroke="#000" stroke-width="1.2" />
<circle cx="995.2" cy="994.4" r="2.5" fill="#000"/>
<line x1="1080.2" y1="977.8" x2="1080.2" y2="994.4" stroke="#000" stroke-width="1.2" />
<circle cx="1080.2" cy="994.4" r="2.5" fill="#000"/>
<line x1="1165.2" y1="977.8" x2="1165.2" y2="994.4" stroke="#000" stroke-width="1.2" />
<circle cx="1165.2" cy="994.4" r="2.5" fill="#000"/>
<line x1="1250.2" y1="977.8" x2="1250.2" y2="994.4" stroke="#000" stroke-width="1.2" />
<circle cx="1250.2" cy="994.4" r="2.5" fill="#000"/>
<line x1="1335.4" y1="977.8" x2="1335.4" y2="994.4" stroke="#000" stroke-width="1.2" />
<circle cx="1335.4" cy="994.4" r="2.5" fill="#000"/>
<line x1="1420.4" y1="977.8" x2="1420.4" y2="994.4" stroke="#000" stroke-width="1.2" />
<circle cx="1420.4" cy="994.4" r="2.5" fill="#000"/>
<line x1="740.4" y1="994.4" x2="740.4" y2="1039.3" stroke="#000" stroke-width="1.2" />
<polygon points="734.4,1011.3 746.4,1011.3 740.4,1021.8" fill="#000"/>
<line x1="734.4" y1="1022.2" x2="746.4" y2="1022.2" stroke="#000" stroke-width="0.9" />
<line x1="825.2" y1="994.4" x2="825.2" y2="1039.3" stroke="#000" stroke-width="1.2" />
<polygon points="819.2,1011.3 831.2,1011.3 825.2,1021.8" fill="#000"/>
<line x1="819.2" y1="1022.2" x2="831.2" y2="1022.2" stroke="#000" stroke-width="0.9" />
<line x1="740.4" y1="1039.3" x2="825.2" y2="1039.3" stroke="#000" stroke-width="1.2" />
<circle cx="740.4" cy="1039.3" r="2.5" fill="#000"/>
<polyline points="740.4,1039.3 740.4,1067.5 756.9,1067.5" fill="none" stroke="#000" stroke-width="1.2" />
<polyline points="756.9,1067.7 759.07,1059.3 763.42,1076.1 767.77,1059.3 772.12,1076.1 776.48,1059.3 780.83,1076.1 783,1067.7" fill="none" stroke="#000" stroke-width="1.3" stroke-linejoin="miter"/>
<line x1="783" y1="1067.5" x2="799" y2="1067.5" stroke="#000" stroke-width="1.2" />
<polyline points="799.2,1067.7 801.39,1059.3 805.78,1076.1 810.16,1059.3 814.54,1076.1 818.92,1059.3 823.31,1076.1 825.5,1067.7" fill="none" stroke="#000" stroke-width="1.3" stroke-linejoin="miter"/>
<line x1="825.4" y1="1067.5" x2="1476.7" y2="1067.5" stroke="#000" stroke-width="1.2" />
<circle cx="853.4" cy="1067.5" r="2.5" fill="#000"/>
<polyline points="853.4,1067.5 853.4,1084.6 842.6,1091" fill="none" stroke="#000" stroke-width="1.2" />
<line x1="842.6" y1="1081.7" x2="842.6" y2="1110.8" stroke="#000" stroke-width="1" />
<polyline points="842.6,1102.2 853.3,1107.3 870.6,1107.3 870.6,1124.3" fill="none" stroke="#000" stroke-width="1.2" />
<polygon points="853.6,1107.6 848.6,1107.0 850.3,1104.0" fill="#000"/>
<line x1="858.9" y1="1124.3" x2="881.9" y2="1124.3" stroke="#000" stroke-width="1.2" />
<line x1="863.4" y1="1124.3" x2="860.8" y2="1130.7" stroke="#000" stroke-width="1.2" />
<line x1="869.2" y1="1124.3" x2="866.6" y2="1130.7" stroke="#000" stroke-width="1.2" />
<line x1="876.1" y1="1124.3" x2="873.5" y2="1130.7" stroke="#000" stroke-width="1.2" />
<line x1="796.5" y1="1096.4" x2="842.6" y2="1096.4" stroke="#000" stroke-width="1.2" />
<polygon points="813.3,1090.6 813.3,1102.2 825,1096.4" fill="#000"/>
<line x1="825.7" y1="1090.3" x2="825.7" y2="1102.5" stroke="#000" stroke-width="1" />
<line x1="796.5" y1="1096.4" x2="796.5" y2="1147.3" stroke="#000" stroke-width="1.2" />
<circle cx="796.5" cy="1147.3" r="2.5" fill="#000"/>
<line x1="779.8" y1="1147.3" x2="910.3" y2="1147.3" stroke="#000" stroke-width="1.2" />
<path d="M779.4 1141 q3 3.2 0.4 6.3 t1 6" fill="none" stroke="#000" stroke-width="1"/>
<line x1="910.3" y1="994.4" x2="910.3" y2="1147.3" stroke="#000" stroke-width="1.2" />
<line x1="904.3" y1="1011.6" x2="916.3" y2="1011.6" stroke="#000" stroke-width="0.9" />
<polygon points="904.3,1022.5 916.3,1022.5 910.3,1011.8" fill="#000"/>
<line x1="989.2" y1="1011.6" x2="1001.2" y2="1011.6" stroke="#000" stroke-width="0.9" />
<polygon points="989.2,1022.5 1001.2,1022.5 995.2,1011.8" fill="#000"/>
<line x1="1074.2" y1="1011.6" x2="1086.2" y2="1011.6" stroke="#000" stroke-width="0.9" />
<polygon points="1074.2,1022.5 1086.2,1022.5 1080.2,1011.8" fill="#000"/>
<line x1="1159.2" y1="1011.6" x2="1171.2" y2="1011.6" stroke="#000" stroke-width="0.9" />
<polygon points="1159.2,1022.5 1171.2,1022.5 1165.2,1011.8" fill="#000"/>
<line x1="1244.2" y1="1011.6" x2="1256.2" y2="1011.6" stroke="#000" stroke-width="0.9" />
<polygon points="1244.2,1022.5 1256.2,1022.5 1250.2,1011.8" fill="#000"/>
<line x1="1329.4" y1="1011.6" x2="1341.4" y2="1011.6" stroke="#000" stroke-width="0.9" />
<polygon points="1329.4,1022.5 1341.4,1022.5 1335.4,1011.8" fill="#000"/>
<line x1="1414.4" y1="1011.6" x2="1426.4" y2="1011.6" stroke="#000" stroke-width="0.9" />
<polygon points="1414.4,1022.5 1426.4,1022.5 1420.4,1011.8" fill="#000"/>
<line x1="995.2" y1="994.4" x2="995.2" y2="1104.6" stroke="#000" stroke-width="1.2" />
<polyline points="995.2,1104.6 1003.7,1106.78 986.7,1111.15 1003.7,1115.52 986.7,1119.88 1003.7,1124.25 986.7,1128.62 995.2,1130.8" fill="none" stroke="#000" stroke-width="1.3" stroke-linejoin="miter"/>
<polyline points="995.2,1130.8 995.2,1147.3 952.4,1147.3 952.4,1112.8" fill="none" stroke="#000" stroke-width="1.2" />
<line x1="952.4" y1="1067.5" x2="952.4" y2="1084.4" stroke="#000" stroke-width="1.2" />
<circle cx="952.4" cy="1067.5" r="2.5" fill="#000"/>
<circle cx="952.4" cy="1098.6" r="14.2" fill="#d3d3d3" stroke="#000" stroke-width="1"/>
<text x="952.4" y="1102.4" font-size="10.5" class="b" text-anchor="middle">P</text>
<line x1="1080.2" y1="994.4" x2="1080.2" y2="1104.6" stroke="#000" stroke-width="1.2" />
<polyline points="1080.2,1104.6 1088.7,1106.78 1071.7,1111.15 1088.7,1115.52 1071.7,1119.88 1088.7,1124.25 1071.7,1128.62 1080.2,1130.8" fill="none" stroke="#000" stroke-width="1.3" stroke-linejoin="miter"/>
<polyline points="1080.2,1130.8 1080.2,1147.3 1037.4,1147.3 1037.4,1112.8" fill="none" stroke="#000" stroke-width="1.2" />
<line x1="1037.4" y1="1067.5" x2="1037.4" y2="1084.4" stroke="#000" stroke-width="1.2" />
<circle cx="1037.4" cy="1067.5" r="2.5" fill="#000"/>
<circle cx="1037.4" cy="1098.6" r="14.2" fill="#d3d3d3" stroke="#000" stroke-width="1"/>
<text x="1037.4" y="1102.4" font-size="10.5" class="b" text-anchor="middle">R</text>
<line x1="1165.2" y1="994.4" x2="1165.2" y2="1104.6" stroke="#000" stroke-width="1.2" />
<polyline points="1165.2,1104.6 1173.7,1106.78 1156.7,1111.15 1173.7,1115.52 1156.7,1119.88 1173.7,1124.25 1156.7,1128.62 1165.2,1130.8" fill="none" stroke="#000" stroke-width="1.3" stroke-linejoin="miter"/>
<polyline points="1165.2,1130.8 1165.2,1147.3 1122.4,1147.3 1122.4,1112.8" fill="none" stroke="#000" stroke-width="1.2" />
<line x1="1122.4" y1="1067.5" x2="1122.4" y2="1084.4" stroke="#000" stroke-width="1.2" />
<circle cx="1122.4" cy="1067.5" r="2.5" fill="#000"/>
<circle cx="1122.4" cy="1098.6" r="14.2" fill="#d3d3d3" stroke="#000" stroke-width="1"/>
<text x="1122.4" y="1102.4" font-size="10.5" class="b" text-anchor="middle">N</text>
<line x1="1250.2" y1="994.4" x2="1250.2" y2="1104.6" stroke="#000" stroke-width="1.2" />
<polyline points="1250.2,1104.6 1258.7,1106.78 1241.7,1111.15 1258.7,1115.52 1241.7,1119.88 1258.7,1124.25 1241.7,1128.62 1250.2,1130.8" fill="none" stroke="#000" stroke-width="1.3" stroke-linejoin="miter"/>
<polyline points="1250.2,1130.8 1250.2,1147.3 1207.4,1147.3 1207.4,1112.8" fill="none" stroke="#000" stroke-width="1.2" />
<line x1="1207.4" y1="1067.5" x2="1207.4" y2="1084.4" stroke="#000" stroke-width="1.2" />
<circle cx="1207.4" cy="1067.5" r="2.5" fill="#000"/>
<circle cx="1207.4" cy="1098.6" r="14.2" fill="#d3d3d3" stroke="#000" stroke-width="1"/>
<text x="1207.4" y="1102.4" font-size="10.5" class="b" text-anchor="middle">D</text>
<line x1="1335.4" y1="994.4" x2="1335.4" y2="1104.6" stroke="#000" stroke-width="1.2" />
<polyline points="1335.4,1104.6 1343.9,1106.78 1326.9,1111.15 1343.9,1115.52 1326.9,1119.88 1343.9,1124.25 1326.9,1128.62 1335.4,1130.8" fill="none" stroke="#000" stroke-width="1.3" stroke-linejoin="miter"/>
<polyline points="1335.4,1130.8 1335.4,1147.3 1292.6,1147.3 1292.6,1112.8" fill="none" stroke="#000" stroke-width="1.2" />
<line x1="1292.6" y1="1067.5" x2="1292.6" y2="1084.4" stroke="#000" stroke-width="1.2" />
<circle cx="1292.6" cy="1067.5" r="2.5" fill="#000"/>
<circle cx="1292.6" cy="1098.6" r="14.2" fill="#d3d3d3" stroke="#000" stroke-width="1"/>
<text x="1292.6" y="1102.4" font-size="10.5" class="b" text-anchor="middle">S</text>
<line x1="1420.4" y1="994.4" x2="1420.4" y2="1104.6" stroke="#000" stroke-width="1.2" />
<polyline points="1420.4,1104.6 1428.9,1106.78 1411.9,1111.15 1428.9,1115.52 1411.9,1119.88 1428.9,1124.25 1411.9,1128.62 1420.4,1130.8" fill="none" stroke="#000" stroke-width="1.3" stroke-linejoin="miter"/>
<polyline points="1420.4,1130.8 1420.4,1147.3 1377.6,1147.3 1377.6,1112.8" fill="none" stroke="#000" stroke-width="1.2" />
<line x1="1377.6" y1="1067.5" x2="1377.6" y2="1084.4" stroke="#000" stroke-width="1.2" />
<circle cx="1377.6" cy="1067.5" r="2.5" fill="#000"/>
<circle cx="1377.6" cy="1098.6" r="14.2" fill="#d3d3d3" stroke="#000" stroke-width="1"/>
<text x="1377.6" y="1102.4" font-size="10.5" class="b" text-anchor="middle">L</text>
<line x1="1476.7" y1="994.4" x2="1476.7" y2="1090.5" stroke="#000" stroke-width="1.2" />
<circle cx="1476.7" cy="1067.5" r="2.5" fill="#000"/>
<line x1="1471.6" y1="1090.5" x2="1481.8" y2="1090.5" stroke="#000" stroke-width="1.2" />
<line x1="1471.6" y1="1096.4" x2="1481.8" y2="1096.4" stroke="#000" stroke-width="1.2" />
<line x1="1476.7" y1="1096.4" x2="1476.7" y2="1141.1" stroke="#000" stroke-width="1.2" />
<circle cx="1476.7" cy="1118.9" r="2.5" fill="#000"/>
<line x1="1465.2" y1="1141.1" x2="1488.2" y2="1141.1" stroke="#000" stroke-width="1.2" />
<line x1="1469.7" y1="1141.1" x2="1467.1" y2="1147.5" stroke="#000" stroke-width="1.2" />
<line x1="1475.5" y1="1141.1" x2="1472.9" y2="1147.5" stroke="#000" stroke-width="1.2" />
<line x1="1482.4" y1="1141.1" x2="1479.8" y2="1147.5" stroke="#000" stroke-width="1.2" />
<polyline points="1505.6,977.8 1505.6,1118.9 1476.7,1118.9" fill="none" stroke="#000" stroke-width="1.6" />
</svg>
</body></html>
